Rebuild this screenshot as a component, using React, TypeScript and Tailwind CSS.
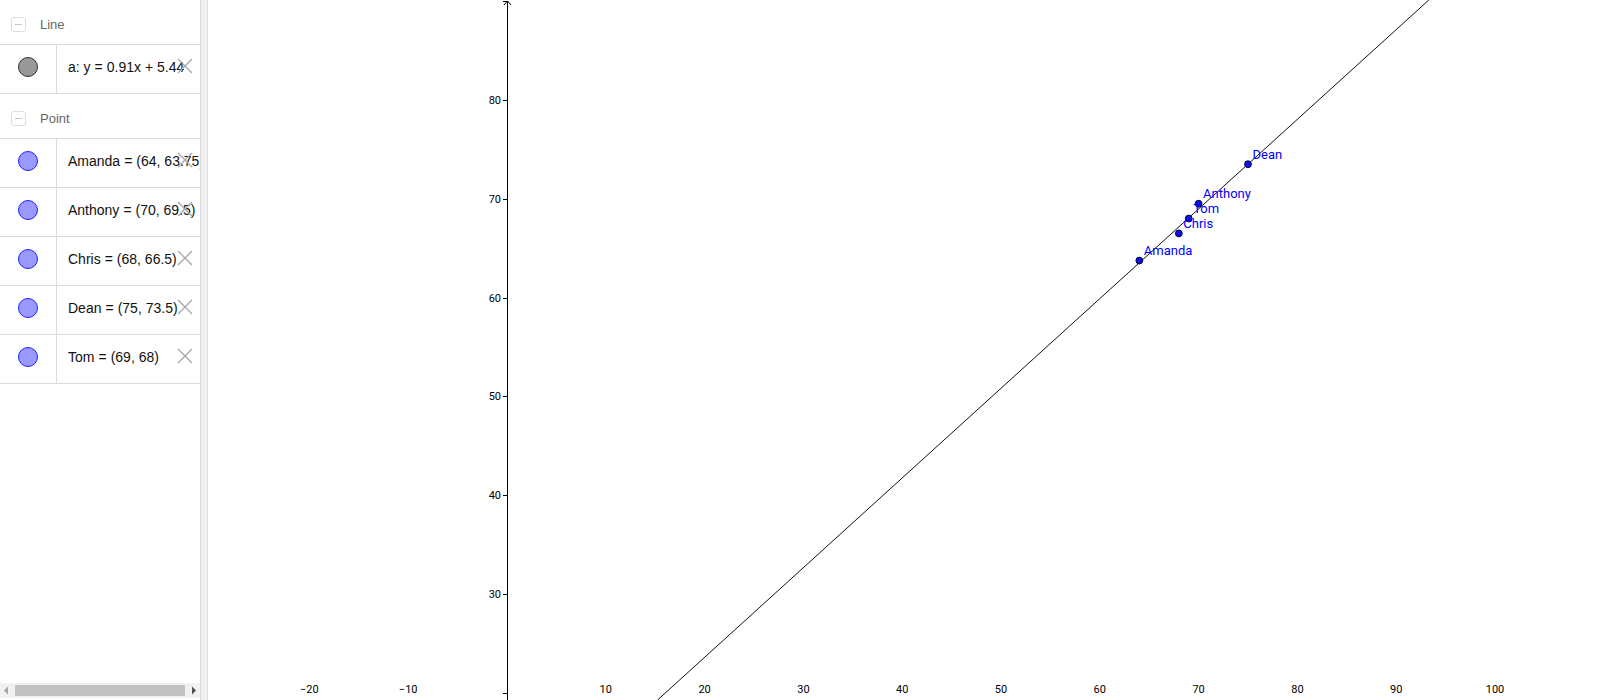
import React from "react";

const SCALE = 9.88;
const OX = 507;
const OY = 890.4;
const px = (x: number) => OX + x * SCALE;
const py = (y: number) => OY - y * SCALE;

const points = [
  { name: "Amanda", x: 64, y: 63.75 },
  { name: "Anthony", x: 70, y: 69.5 },
  { name: "Chris", x: 68, y: 66.5 },
  { name: "Dean", x: 75, y: 73.5 },
  { name: "Tom", x: 69, y: 68 },
];

const fmt = (n: number) => String(n);

const MinusBox = () => (
  <div className="w-[15px] h-[15px] rounded-[3px] border border-[#dedede] flex items-center justify-center">
    <div className="w-[7px] h-px bg-[#c4c4c4]" />
  </div>
);

const Header = ({ label }: { label: string }) => (
  <div className="h-[45px] border-b border-[#dcdcdc] flex items-center gap-[14px] pl-[11px] pt-[5px] shrink-0">
    <MinusBox />
    <span className="text-[13px] text-[#666]">{label}</span>
  </div>
);

const DeleteIcon = () => (
  <svg width="16" height="16" viewBox="0 0 16 16" className="absolute right-[7px] top-[13px]">
    <path d="M1 1 L15 15 M15 1 L1 15" stroke="#a8a8a8" strokeWidth="1.4" fill="none" />
  </svg>
);

const Eq = () => <span className="mx-[4px]">=</span>;

const Row = ({ kind, name, value }: { kind: "line" | "point"; name: string; value: string }) => (
  <div className="relative h-[49px] border-b border-[#dcdcdc] flex shrink-0">
    <div className="w-[57px] shrink-0 border-r border-[#dcdcdc] flex items-center justify-center pb-[5px]">
      {kind === "line" ? (
        <div className="w-[20px] h-[20px] rounded-full bg-[#999999] border-[1.5px] border-[#333]" />
      ) : (
        <div className="w-[20px] h-[20px] rounded-full bg-[#9999ff] border border-[#2222ff]" />
      )}
    </div>
    <div className="flex items-center pl-[11px] pb-[3px] text-[14px] text-[#111] whitespace-pre overflow-hidden">
      <span>{name}</span>
      <Eq />
      <span>{value}</span>
    </div>
    <DeleteIcon />
  </div>
);

const Sidebar = () => (
  <div className="w-[201px] h-full border-r border-[#dcdcdc] flex flex-col bg-white font-['Liberation_Sans',Arial,sans-serif] shrink-0">
    <Header label="Line" />
    <Row kind="line" name="a: y" value="0.91x + 5.44" />
    <Header label="Point" />
    {points.map((p) => (
      <Row key={p.name} kind="point" name={p.name} value={`(${fmt(p.x)}, ${fmt(p.y)})`} />
    ))}
    <div className="flex-1" />
    <div className="h-[15px] mb-[2px] bg-[#f1f1f1] flex items-center px-[2px] gap-[4px]">
      <svg width="9" height="11" viewBox="0 0 9 11">
        <path d="M6 1.5 L2 5.5 L6 9.5 Z" fill="#a3a3a3" />
      </svg>
      <div className="flex-1 h-[11px] bg-[#c1c1c1]" />
      <svg width="9" height="11" viewBox="0 0 9 11">
        <path d="M3 1.5 L7 5.5 L3 9.5 Z" fill="#505050" />
      </svg>
    </div>
  </div>
);

const Graphics = () => {
  const yTicks = [20, 30, 40, 50, 60, 70, 80, 90];
  const yLabels = [30, 40, 50, 60, 70, 80];
  const xLabels = [-20, -10, 10, 20, 30, 40, 50, 60, 70, 80, 90, 100];
  const m = 0.9076;
  const b = 5.44;
  const yTop = (OY - 0) / SCALE;
  const yBot = (OY - 700) / SCALE;
  const x1 = px((yBot - b) / m);
  const x2 = px((yTop - b) / m);
  return (
    <div className="relative flex-1 h-full bg-white overflow-hidden">
      <svg className="absolute inset-0" width="100%" height="100%" viewBox="208 0 1392 700">
        <line x1={OX + 0.5} y1={1} x2={OX + 0.5} y2={700} stroke="#000" strokeWidth="1" />
        <path d={`M${OX - 3} 5 L${OX + 0.5} 1 L${OX + 4} 5`} stroke="#000" strokeWidth="1" fill="none" />
        {yTicks.map((v) => (
          <line key={v} x1={OX - 4} y1={Math.round(py(v)) + 0.5} x2={OX} y2={Math.round(py(v)) + 0.5} stroke="#000" strokeWidth="1" />
        ))}
        <g fontFamily="Roboto, 'Liberation Sans', sans-serif" fontSize="11" fill="#000">
          {yLabels.map((v) => (
            <text key={v} x={OX - 6} y={py(v) + 4} textAnchor="end">
              {v}
            </text>
          ))}
          {xLabels.map((v) => (
            <text key={v} x={px(v)} y={693} textAnchor="middle">
              {v < 0 ? `\u2212${-v}` : v}
            </text>
          ))}
        </g>
        <line x1={x1} y1={700} x2={x2} y2={0} stroke="#111" strokeWidth="1" />
        {points.map((p) => (
          <circle key={p.name} cx={px(p.x)} cy={py(p.y)} r="3.4" fill="#1010ee" stroke="#000040" strokeWidth="1" />
        ))}
        <g fontFamily="Roboto, 'Liberation Sans', sans-serif" fontSize="13" fill="#0000ff">
          {points.map((p) => (
            <text key={p.name} x={px(p.x) + 4.5} y={py(p.y) - 5.5}>
              {p.name}
            </text>
          ))}
        </g>
      </svg>
    </div>
  );
}

export default function App() {
  return (
    <div className="w-[1600px] h-[700px] flex overflow-hidden bg-white">
      <Sidebar />
      <div className="w-[7px] h-full bg-[#f0f0f0] border-r border-[#e0e0e0] shrink-0" />
      <Graphics />
    </div>
  );
}
